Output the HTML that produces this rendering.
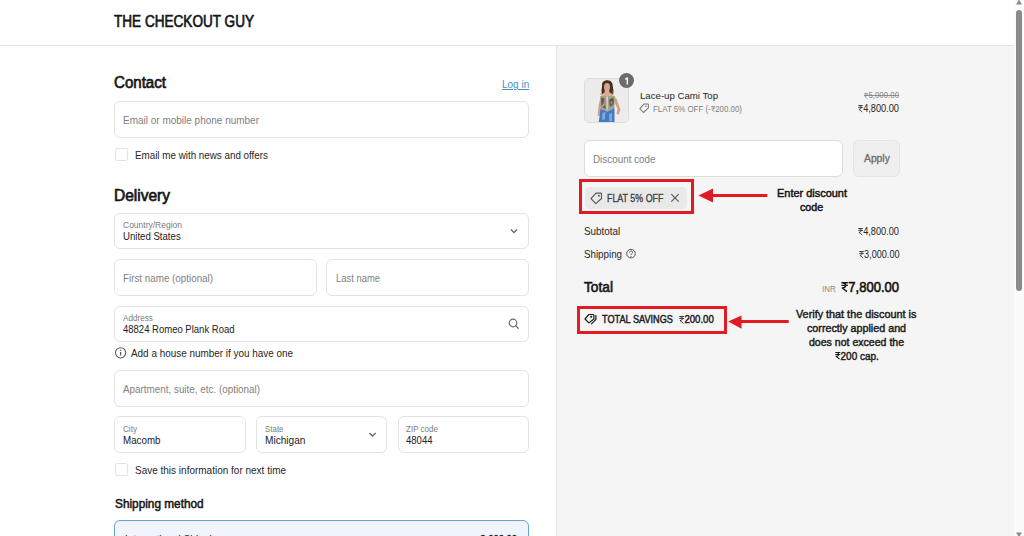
<!DOCTYPE html><html><head><meta charset="utf-8"><style>html,body{margin:0;padding:0}
body{width:1024px;height:536px;overflow:hidden;position:relative;background:#fff;font-family:"Liberation Sans",sans-serif}
.t{position:absolute;white-space:nowrap;line-height:1;transform-origin:0 0}
.rs{display:inline-block;vertical-align:baseline;overflow:visible}
.a{position:absolute;box-sizing:border-box}
.box{position:absolute;box-sizing:border-box;border:1px solid #e3e3e3;border-radius:6px;background:#fff}
svg.i{position:absolute;overflow:visible}
</style></head><body><!-- header line & sidebar -->
<div class="a" style="left:0;top:45px;width:1014px;height:1px;background:#e3e3e3"></div>
<div class="a" style="left:556px;top:46px;width:458px;height:490px;background:#f5f5f5;border-left:1px solid #e3e3e3"></div>
<!-- scrollbar -->
<div class="a" style="left:1014px;top:0;width:10px;height:536px;background:#fbfbfb"></div>
<div class="a" style="left:1016px;top:9.5px;width:6px;height:281px;background:#8a8a8a;border-radius:3px"></div>
<svg class="i" style="left:1014px;top:0" width="10" height="6"><path d="M2 4.6L5 -0.5L8 4.6Z" fill="#8a8a8a"/></svg>
<svg class="i" style="left:1014px;top:530px" width="10" height="6"><path d="M2 2.5H8L5 7Z" fill="#8a8a8a"/></svg>

<!-- contact -->
<div class="box" style="left:114px;top:101px;width:415px;height:36.5px"></div>
<div class="a" style="left:115px;top:148px;width:12.5px;height:12.5px;border:1px solid #e2e2e2;border-radius:2.5px"></div>

<!-- delivery -->
<div class="box" style="left:114px;top:213px;width:415px;height:36px"></div>
<svg class="i" style="left:510px;top:228px" width="8" height="6"><path d="M1 1.5L4 4.5L7 1.5" fill="none" stroke="#666" stroke-width="1.3"/></svg>
<div class="box" style="left:114px;top:259px;width:202.5px;height:36.5px"></div>
<div class="box" style="left:326px;top:259px;width:203px;height:36.5px"></div>
<div class="box" style="left:114px;top:305.5px;width:415px;height:36px"></div>
<svg class="i" style="left:507.5px;top:318px" width="12" height="12"><circle cx="5" cy="5" r="3.8" fill="none" stroke="#6a6a6a" stroke-width="1.2"/><path d="M7.6 7.6L10.2 10.2" stroke="#6a6a6a" stroke-width="1.3" stroke-linecap="round"/></svg>
<svg class="i" style="left:115px;top:347px" width="12" height="12"><circle cx="5.6" cy="5.8" r="5.1" fill="none" stroke="#5a5a5a" stroke-width="1.05"/><path d="M5.6 5V8.6" stroke="#5a5a5a" stroke-width="1.2"/><circle cx="5.6" cy="3.4" r="0.7" fill="#5a5a5a"/></svg>
<div class="box" style="left:114px;top:370px;width:415px;height:36.5px"></div>
<div class="box" style="left:114px;top:416px;width:131.5px;height:36.5px"></div>
<div class="box" style="left:256px;top:416px;width:131px;height:36.5px"></div>
<svg class="i" style="left:368px;top:431px" width="9" height="7"><path d="M1.3 2L4.5 5L7.7 2" fill="none" stroke="#666" stroke-width="1.3"/></svg>
<div class="box" style="left:397.5px;top:416px;width:131.5px;height:36.5px"></div>
<div class="a" style="left:115px;top:463px;width:12.5px;height:12.5px;border:1px solid #e2e2e2;border-radius:2.5px"></div>
<div class="a" style="left:114px;top:520px;width:415px;height:40px;border:1px solid #68a3d6;border-radius:6px;background:#f0f5fd"></div>

<!-- product -->
<div class="a" style="left:584px;top:78px;width:45px;height:45px;border:1px solid #dcdcdc;border-radius:5px;background:#ececec;overflow:hidden">
<svg width="45" height="45" viewBox="0 0 45 45" style="position:absolute;left:-1px;top:-1px">
  <rect x="0" y="0" width="45" height="45" fill="#ececec"/>
  <path d="M18 7C17.5 1 28 0.5 28.5 6C29 9.5 29.5 13 30 16.5L16.5 16.5C17.5 13 18 10 18 7Z" fill="#4a2f24"/>
  <ellipse cx="23" cy="9" rx="3" ry="4" fill="#d3a78d"/>
  <path d="M21 11L25 11L25.5 14.5C27 15 28.5 15.5 29.5 18L17 18C18 15.5 19.5 15 20.5 14.5Z" fill="#d6ae95"/>
  <path d="M17 17L14.5 28L13.5 37.5L16.5 38.5L18 31L18.5 21Z" fill="#cfa389"/>
  <path d="M29.5 17L33 21.5L36.5 32L34.5 37L32.5 35.5L33.5 31L30 23Z" fill="#cfa389"/>
  <path d="M16.5 18L30.5 18L30.5 30L23.5 33.5L16.5 31Z" fill="#a79f8d"/>
  <path d="M17 19.5L20.5 20.5L20 25L17.5 28ZM25 21.5L29.5 19.5L30 26L26 29ZM18.5 29L21 27L22 31Z" fill="#56624c"/>
  <path d="M22.3 18.5L24 18.5L23.7 32.5L22.6 32.5Z" fill="#e0d6c6"/>
  <path d="M19.5 24L22 23L22.5 27L20 27.5ZM26 24L28.5 23.5L28 27Z" fill="#b58a86"/>
  <path d="M17 18L17.5 13.5M29.8 18L29 13.5" stroke="#e8dccb" stroke-width="0.8"/>
  <path d="M16.5 31L23.5 33.5L30.5 30L30.5 46L14.5 46Z" fill="#4479c4"/>
  <path d="M18.5 35L21.5 34L21 41L18 42ZM25 36L28 35L28 43L25.5 44Z" fill="#8ab0e0" opacity="0.85"/>
</svg></div>
<div class="a" style="left:618.6px;top:72.6px;width:15.6px;height:15.6px;border-radius:50%;background:#6b6b6b"></div>
<svg class="i" style="left:622px;top:77px" width="9" height="9"><path d="M3.2 2.3L5.3 1V7.6" fill="none" stroke="#f2f2f2" stroke-width="1.5" stroke-linejoin="round"/></svg>
<svg class="i" style="left:639px;top:103px" width="12" height="11"><path d="M0.9 5.7L5.1 0.9H8.6Q9.4 0.9 9.4 1.7V4.9L4.5 9.5Z" fill="none" stroke="#777" stroke-width="1.05" stroke-linejoin="round"/><circle cx="6.9" cy="3.2" r="0.8" fill="#777"/></svg>

<div class="a" style="left:864px;top:94.5px;width:35px;height:0.9px;background:#8e8e8e"></div>
<!-- discount -->
<div class="box" style="left:584px;top:140px;width:259px;height:36.5px;border-color:#dcdcdc"></div>
<div class="box" style="left:853px;top:140px;width:46.5px;height:36.5px;border-color:#e4e4e4;background:#efefef"></div>
<div class="a" style="left:579px;top:179px;width:115px;height:35px;border:3px solid #e21b23"></div>
<div class="a" style="left:584.5px;top:186.5px;width:102px;height:22px;border-radius:5px;background:#e9e9e9"></div>
<svg class="i" style="left:590px;top:191.5px" width="14" height="13"><path d="M1 6.7L6 1.1H10.7Q11.5 1.1 11.5 1.9V6.5L5.8 11.7Z" fill="none" stroke="#555" stroke-width="1.1" stroke-linejoin="round"/><circle cx="8.9" cy="3.7" r="0.95" fill="#555"/></svg>
<svg class="i" style="left:670px;top:193px" width="10" height="10"><path d="M1.3 1.2L8.7 8.6M8.7 1.2L1.3 8.6" stroke="#555" stroke-width="1.1"/></svg>
<!-- arrow 1 -->
<svg class="i" style="left:696px;top:186px" width="74" height="20"><path d="M2.4 9.5L17 2.6V16.4Z" fill="#e21b23"/><rect x="15" y="8" width="56.3" height="3" fill="#e21b23"/></svg>

<!-- totals -->
<svg class="i" style="left:626px;top:248.7px" width="11" height="10"><circle cx="5" cy="4.6" r="4.3" fill="none" stroke="#555" stroke-width="1"/><path d="M3.5 3.6C3.5 1.5 6.6 1.5 6.6 3.4C6.6 4.7 5 4.6 5 6" fill="none" stroke="#555" stroke-width="1"/><circle cx="5" cy="7.3" r="0.6" fill="#555"/></svg>
<div class="a" style="left:577px;top:306px;width:149.5px;height:28px;border:3px solid #e21b23"></div>
<svg class="i" style="left:583.5px;top:314px" width="14" height="12"><path d="M1 5L4.9 0.5H9Q9.9 0.5 9.9 1.4V5L4.9 8.9Z" fill="none" stroke="#1c1c1c" stroke-width="1.2" stroke-linejoin="round"/><path d="M11.9 1.4V5.4L7.5 9.8" fill="none" stroke="#1c1c1c" stroke-width="1.2" stroke-linecap="round" stroke-linejoin="round"/><circle cx="7.2" cy="2.7" r="1.05" fill="#1c1c1c"/></svg>
<!-- arrow 2 -->
<svg class="i" style="left:726px;top:313px" width="66" height="18"><path d="M2.2 8.5L15.5 2.4V15.7Z" fill="#e21b23"/><rect x="14" y="7" width="48.7" height="3" fill="#e21b23"/></svg>
<div class="t" id="t0" style="left:114.30px;top:13.59px;font-size:15.6px;font-weight:400;color:#161616;-webkit-text-stroke:0.66px #161616;transform:scaleX(0.8702)">THE CHECKOUT GUY</div><div class="t" id="t1" style="left:114.20px;top:74.79px;font-size:15.6px;font-weight:400;color:#161616;-webkit-text-stroke:0.67px #161616;transform:scaleX(0.9674)">Contact</div><div class="t" id="t2" style="left:501.70px;top:79.37px;font-size:10.67px;font-weight:400;color:#4a90c8;text-decoration:underline;text-underline-offset:1px;transform:scaleX(0.9364)">Log in</div><div class="t" id="t3" style="left:123.00px;top:115.76px;font-size:10.09px;font-weight:400;color:#7f7f7f;;transform:scaleX(0.9909)">Email or mobile phone number</div><div class="t" id="t4" style="left:135.00px;top:151.26px;font-size:10.09px;font-weight:400;color:#262626;;transform:scaleX(0.9744)">Email me with news and offers</div><div class="t" id="t5" style="left:114.20px;top:187.99px;font-size:15.6px;font-weight:400;color:#161616;-webkit-text-stroke:0.67px #161616;transform:scaleX(0.9942)">Delivery</div><div class="t" id="t6" style="left:123.00px;top:221.44px;font-size:8.34px;font-weight:400;color:#7c7c7c;;transform:scaleX(1.0194)">Country/Region</div><div class="t" id="t7" style="left:123.00px;top:232.26px;font-size:10.09px;font-weight:400;color:#222;;transform:scaleX(0.9535)">United States</div><div class="t" id="t8" style="left:123.00px;top:273.86px;font-size:10.09px;font-weight:400;color:#7f7f7f;;transform:scaleX(0.9738)">First name (optional)</div><div class="t" id="t9" style="left:335.50px;top:273.86px;font-size:10.09px;font-weight:400;color:#7f7f7f;;transform:scaleX(0.9349)">Last name</div><div class="t" id="t10" style="left:123.00px;top:314.24px;font-size:8.34px;font-weight:400;color:#7c7c7c;;transform:scaleX(0.9751)">Address</div><div class="t" id="t11" style="left:123.00px;top:325.46px;font-size:10.09px;font-weight:400;color:#222;;transform:scaleX(0.9432)">48824 Romeo Plank Road</div><div class="t" id="t12" style="left:130.80px;top:349.06px;font-size:10.09px;font-weight:400;color:#262626;;transform:scaleX(0.9834)">Add a house number if you have one</div><div class="t" id="t13" style="left:123.30px;top:384.86px;font-size:10.09px;font-weight:400;color:#7f7f7f;;transform:scaleX(0.9782)">Apartment, suite, etc. (optional)</div><div class="t" id="t14" style="left:122.80px;top:425.34px;font-size:8.34px;font-weight:400;color:#7c7c7c;;transform:scaleX(0.9760)">City</div><div class="t" id="t15" style="left:122.80px;top:436.26px;font-size:10.09px;font-weight:400;color:#222;;transform:scaleX(0.9701)">Macomb</div><div class="t" id="t16" style="left:264.70px;top:425.34px;font-size:8.34px;font-weight:400;color:#7c7c7c;;transform:scaleX(0.9510)">State</div><div class="t" id="t17" style="left:264.70px;top:436.26px;font-size:10.09px;font-weight:400;color:#222;;transform:scaleX(1.0039)">Michigan</div><div class="t" id="t18" style="left:405.80px;top:425.34px;font-size:8.34px;font-weight:400;color:#7c7c7c;;transform:scaleX(0.9642)">ZIP code</div><div class="t" id="t19" style="left:405.80px;top:436.26px;font-size:10.09px;font-weight:400;color:#222;;transform:scaleX(0.9454)">48044</div><div class="t" id="t20" style="left:135.00px;top:466.26px;font-size:10.09px;font-weight:400;color:#262626;;transform:scaleX(0.9911)">Save this information for next time</div><div class="t" id="t21" style="left:114.50px;top:497.67px;font-size:12.2px;font-weight:400;color:#161616;-webkit-text-stroke:0.51px #161616;transform:scaleX(0.9696)">Shipping method</div><div class="t" id="t22" style="left:124.60px;top:535.26px;font-size:10.09px;font-weight:400;color:#222;;transform:scaleX(1.0051)">International Shipping</div><div class="t" id="t23" style="left:475.40px;top:535.26px;font-size:10.09px;font-weight:400;color:#222;-webkit-text-stroke:0.44px #222;transform:scaleX(0.9359)"><svg class="rs" viewBox="0 0 56 70" style="width:0.56em;height:0.7em"><path d="M3 5H53M3 24H53M10 5C44 5 44 43 10 43L46 69" fill="none" stroke="currentColor" stroke-width="10.5" stroke-linejoin="round"/></svg>3,000.00</div><div class="t" id="t24" style="left:639.75px;top:90.97px;font-size:9.6px;font-weight:400;color:#262626;;transform:scaleX(1.0040)">Lace-up Cami Top</div><div class="t" id="t25" style="left:653.00px;top:104.91px;font-size:8.73px;font-weight:400;color:#808080;;transform:scaleX(0.9074)">FLAT 5% OFF (-<svg class="rs" viewBox="0 0 56 70" style="width:0.56em;height:0.7em"><path d="M3 5H53M3 24H53M10 5C44 5 44 43 10 43L46 69" fill="none" stroke="currentColor" stroke-width="8.5" stroke-linejoin="round"/></svg>200.00)</div><div class="t" id="t26" style="left:864.00px;top:91.44px;font-size:8.34px;font-weight:400;color:#8a8a8a;;transform:scaleX(0.9440)"><svg class="rs" viewBox="0 0 56 70" style="width:0.56em;height:0.7em"><path d="M3 5H53M3 24H53M10 5C44 5 44 43 10 43L46 69" fill="none" stroke="currentColor" stroke-width="8.5" stroke-linejoin="round"/></svg>5,000.00</div><div class="t" id="t27" style="left:858.00px;top:104.26px;font-size:10.09px;font-weight:400;color:#262626;;transform:scaleX(0.9136)"><svg class="rs" viewBox="0 0 56 70" style="width:0.56em;height:0.7em"><path d="M3 5H53M3 24H53M10 5C44 5 44 43 10 43L46 69" fill="none" stroke="currentColor" stroke-width="8.5" stroke-linejoin="round"/></svg>4,800.00</div><div class="t" id="t28" style="left:592.60px;top:155.06px;font-size:10.09px;font-weight:400;color:#7f7f7f;;transform:scaleX(0.9785)">Discount code</div><div class="t" id="t29" style="left:863.60px;top:154.10px;font-size:10.28px;font-weight:400;color:#6f6f6f;-webkit-text-stroke:0.35px #6f6f6f;transform:scaleX(1.0044)">Apply</div><div class="t" id="t30" style="left:606.80px;top:193.66px;font-size:10.09px;font-weight:400;color:#454545;-webkit-text-stroke:0.35px #454545;transform:scaleX(0.8808)">FLAT 5% OFF</div><div class="t" id="t31" style="left:777.00px;top:188.96px;font-size:10.09px;font-weight:400;color:#141414;-webkit-text-stroke:0.44px #141414;transform:scaleX(1.0863)">Enter discount</div><div class="t" id="t32" style="left:800.40px;top:202.56px;font-size:10.09px;font-weight:400;color:#141414;-webkit-text-stroke:0.44px #141414;transform:scaleX(1.0613)">code</div><div class="t" id="t33" style="left:584.00px;top:227.26px;font-size:10.09px;font-weight:400;color:#262626;;transform:scaleX(0.9788)">Subtotal</div><div class="t" id="t34" style="left:858.30px;top:227.26px;font-size:10.09px;font-weight:400;color:#262626;;transform:scaleX(0.9136)"><svg class="rs" viewBox="0 0 56 70" style="width:0.56em;height:0.7em"><path d="M3 5H53M3 24H53M10 5C44 5 44 43 10 43L46 69" fill="none" stroke="currentColor" stroke-width="8.5" stroke-linejoin="round"/></svg>4,800.00</div><div class="t" id="t35" style="left:584.00px;top:250.06px;font-size:10.09px;font-weight:400;color:#262626;;transform:scaleX(0.9685)">Shipping</div><div class="t" id="t36" style="left:858.80px;top:250.06px;font-size:10.09px;font-weight:400;color:#262626;;transform:scaleX(0.9025)"><svg class="rs" viewBox="0 0 56 70" style="width:0.56em;height:0.7em"><path d="M3 5H53M3 24H53M10 5C44 5 44 43 10 43L46 69" fill="none" stroke="currentColor" stroke-width="8.5" stroke-linejoin="round"/></svg>3,000.00</div><div class="t" id="t37" style="left:584.00px;top:280.15px;font-size:14px;font-weight:400;color:#161616;-webkit-text-stroke:0.59px #161616;transform:scaleX(0.9805)">Total</div><div class="t" id="t38" style="left:822.00px;top:285.25px;font-size:8.92px;font-weight:400;color:#8a8a8a;;transform:scaleX(0.8929)">INR</div><div class="t" id="t39" style="left:841.30px;top:280.15px;font-size:14px;font-weight:400;color:#161616;-webkit-text-stroke:0.59px #161616;transform:scaleX(0.9306)"><svg class="rs" viewBox="0 0 56 70" style="width:0.56em;height:0.7em"><path d="M3 5H53M3 24H53M10 5C44 5 44 43 10 43L46 69" fill="none" stroke="currentColor" stroke-width="10.5" stroke-linejoin="round"/></svg>7,800.00</div><div class="t" id="t40" style="left:602.00px;top:314.37px;font-size:10.67px;font-weight:400;color:#1c1c1c;-webkit-text-stroke:0.45px #1c1c1c;transform:scaleX(0.8604)">TOTAL SAVINGS</div><div class="t" id="t41" style="left:679.00px;top:314.37px;font-size:10.67px;font-weight:400;color:#1c1c1c;-webkit-text-stroke:0.45px #1c1c1c;transform:scaleX(0.9024)"><svg class="rs" viewBox="0 0 56 70" style="width:0.56em;height:0.7em"><path d="M3 5H53M3 24H53M10 5C44 5 44 43 10 43L46 69" fill="none" stroke="currentColor" stroke-width="8.5" stroke-linejoin="round"/></svg>200.00</div><div class="t" id="t42" style="left:796.35px;top:309.97px;font-size:10.19px;font-weight:400;color:#1e1e1e;-webkit-text-stroke:0.44px #1e1e1e;transform:scaleX(1.0637)">Verify that the discount is</div><div class="t" id="t43" style="left:806.95px;top:323.67px;font-size:10.19px;font-weight:400;color:#1e1e1e;-webkit-text-stroke:0.44px #1e1e1e;transform:scaleX(1.0557)">correctly applied and</div><div class="t" id="t44" style="left:808.95px;top:337.87px;font-size:10.19px;font-weight:400;color:#1e1e1e;-webkit-text-stroke:0.44px #1e1e1e;transform:scaleX(1.0379)">does not exceed the</div><div class="t" id="t45" style="left:834.60px;top:351.57px;font-size:10.19px;font-weight:400;color:#1e1e1e;-webkit-text-stroke:0.44px #1e1e1e;transform:scaleX(0.9791)"><svg class="rs" viewBox="0 0 56 70" style="width:0.56em;height:0.7em"><path d="M3 5H53M3 24H53M10 5C44 5 44 43 10 43L46 69" fill="none" stroke="currentColor" stroke-width="10.5" stroke-linejoin="round"/></svg>200 cap.</div></body></html>
